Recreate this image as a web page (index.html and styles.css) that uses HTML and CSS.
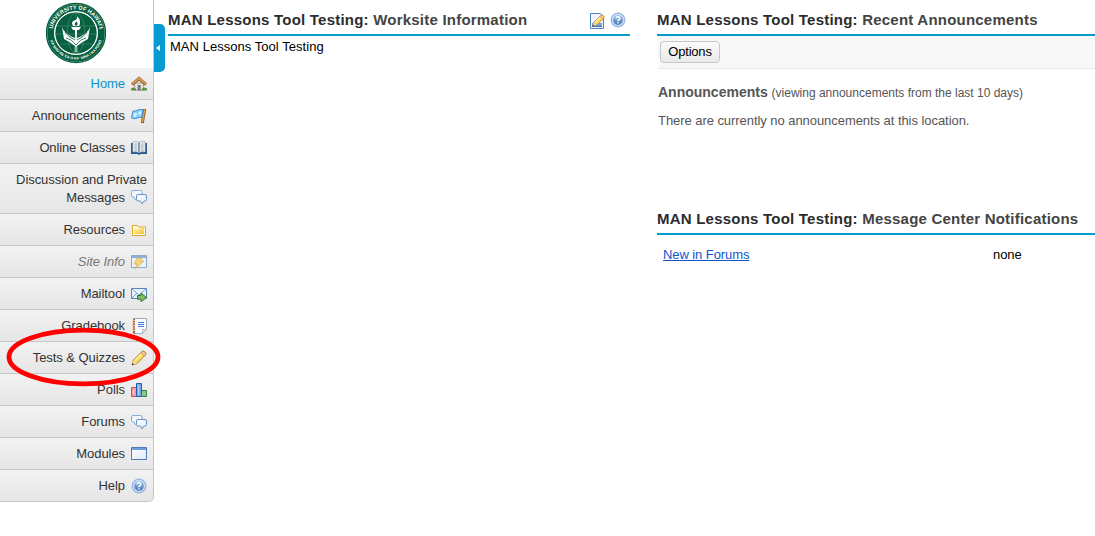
FILE: index.html
```html
<!DOCTYPE html>
<html lang="en">
<head>
<meta charset="utf-8">
<title>MAN Lessons Tool Testing</title>
<link rel="stylesheet" href="styles.css">
</head>
<body>
<svg class="defs" width="0" height="0" aria-hidden="true">
  <defs>
    <linearGradient id="blue" x1="0" y1="0" x2="0" y2="1"><stop offset="0" stop-color="#9cc0ea"/><stop offset="1" stop-color="#4475b5"/></linearGradient>
    <linearGradient id="gold" x1="0" y1="0" x2="1" y2="1"><stop offset="0" stop-color="#fff6b8"/><stop offset="1" stop-color="#efc12c"/></linearGradient>
    <linearGradient id="pane" x1="0" y1="0" x2="1" y2="1"><stop offset="0" stop-color="#fff"/><stop offset="1" stop-color="#dfeafa"/></linearGradient>
    <symbol id="chat" viewBox="0 0 16 16">
      <path d="M2 1.500h7.500q1.500 0 1.500 1.500v3.500q0 1.500-1.500 1.500H6L4.500 11 3 8H2Q.5 8 .5 6.500V3Q.5 1.500 2 1.500z" fill="#f3f8fe" stroke="#86add9"/>
      <path d="M7 5.500h7q1.500 0 1.500 1.500v3.500q0 1.500-1.500 1.500h-1l-2 3-1.500-3H7Q5.500 12 5.500 10.500V7Q5.500 5.500 7 5.500z" fill="url(#pane)" stroke="#6793c8"/>
    </symbol>
    <symbol id="help" viewBox="0 0 16 16">
      <circle cx="8" cy="8" r="7" fill="#b8d0ef" stroke="#7d9fd2" stroke-width=".8"/>
      <circle cx="8" cy="8" r="5.300" fill="url(#blue)" stroke="#eaf2fd" stroke-width=".7"/>
      <path d="M6 6.500Q6.200 4.700 8 4.700t2 1.600Q10 7.300 8 8.200v1M8 10.200v1.400" fill="none" stroke="#fff" stroke-width="1.500"/>
    </symbol>
    <symbol id="pencil" viewBox="0 0 16 16">
      <path d="M1 15l1.500-5L11 1.500q1.500-1 3 .5t.5 3L6 13.500z" fill="#f8d65c" stroke="#b57a20" stroke-width=".9"/>
      <path d="M4 10.500L11.500 3" stroke="#fff3ad" stroke-width="1.500"/>
      <path d="M1.200 14.800l1.300-4.300 3.200 3z" fill="#f7ddb0"/>
      <path d="M.8 15.200l.7-2.200 1.500 1.500z" fill="#3c3020"/>
      <path d="M11 1.800q1.500-1 3 .4t.4 2.800l-1.200 1-3.300-3.200z" fill="#f5c99b" stroke="#bb7c35" stroke-width=".6"/>
    </symbol>
  </defs>
</svg>
<div class="page">
  <aside class="sidebar">
    <div class="logo">
      <svg width="60" height="62" viewBox="-30 -31 60 62" role="img" aria-label="University of Hawaii seal">
        <defs>
          <path id="arc-top" d="M-23.500-3A23.700 23.700 0 0 1 23.500-3"/>
          <path id="arc-bottom" d="M-26.200 5A26.700 26.700 0 0 0 26.200 5"/>
        </defs>
        <circle r="29.500" fill="#fff" stroke="#075f40" stroke-width="1.400"/>
        <circle r="25.300" fill="none" stroke="#075f40" stroke-width="7"/>
        <circle r="20.800" fill="#075f40"/>
        <circle r="21.400" fill="none" stroke="#fff" stroke-width=".8"/>
        <g fill="none" stroke="#5b9b7f" stroke-width=".5"><ellipse rx="9" ry="20"/><path d="M-19-7H19M-20 1H20M-16 11H16M0-20V20"/></g>
        <path d="M-14-6Q-12 1-1 5L0 8 1 5Q12 1 14-6L12 6Q6 9 1 13L0 16-1 13Q-6 9-12 6z" fill="#fff"/>
        <path d="M-11-1Q-8 4-1 7M11-1Q8 4 1 7M-10 5Q-4 6 0 12 4 6 10 5" fill="none" stroke="#075f40" stroke-width=".8"/>
        <path d="M-5-6h10L3-3H1L.7 9H-.7L-1-3h-2zM-3-7Q-6-12 0-13 2-15 1-17 6-12 3-7z" fill="#fff"/>
        <path d="M-1-7.500Q-2-10 1-11.500 2-9 1-7.500z" fill="#075f40"/>
        <path d="M-1.500 14h3v5h-3z" fill="#8dbaa5"/>
        <text class="seal-text"><textPath href="#arc-top" startOffset="50%">UNIVERSITY OF HAWAI‘I</textPath></text>
        <text class="seal-text seal-small"><textPath href="#arc-bottom" startOffset="50%">UA MAU KE EA O KA ‘AINA I KA PONO</textPath></text>
      </svg>
    </div>
    <ul class="tools">
      <li class="tool current"><span>Home</span>
        <svg class="icon" viewBox="0 0 16 16"><path d="M3.500 7h9v7h-9z" fill="#e7e3df" stroke="#8d8178" stroke-width=".7"/><path d="M6.700 9h3v5.500h-3z" fill="#77777d"/><path d="M1 8.500L8 2.500l7 6" fill="none" stroke="#8c5828" stroke-width="3"/><path d="M1.200 8L8 2.200 14.800 8" fill="none" stroke="#d79d5b" stroke-width="1.800"/><path d="M0 12.500l2-1 3 1v2H0zM11 12.500l3-1 2 1v2h-5z" fill="#569542"/><path d="M6 14h4.500v1H6z" fill="#a9a097"/></svg></li>
      <li class="tool"><span>Announcements</span>
        <svg class="icon" viewBox="0 0 16 16"><path d="M11.300 15L13.700 1" stroke="#8d5b22" stroke-width="3"/><path d="M11.500 14L13.500 1.500" stroke="#e3a44c" stroke-width="1.400"/><path d="M2 3q3 .5 5-1t5 0l-1.300 8q-2-1.500-4.700 0t-5.500 0z" fill="#8bd3fa" stroke="#3d8cd0"/><path d="M3 5h3l-1 3.500H2.500zM8 3.500h2.500L10 6.500H7.500z" fill="#d9f4ff"/></svg></li>
      <li class="tool classes"><span>Online Classes</span>
        <svg class="icon" viewBox="0 0 16 16"><path d="M0 3h16v11H9.500L8 15l-1.500-1H0z" fill="#28588f"/><path d="M1.800 1.800q4-1 6.200.8 2.200-1.800 6.200-.8V12q-4-.8-6.200.9Q5.800 11.200 1.800 12z" fill="#f5f7f8" stroke="#7e93a8" stroke-width=".6"/><path d="M8 2.500v10" stroke="#4a6380" stroke-width="1.200"/><path d="M3.300 4h3M3.300 6h3M3.300 8h3M3.300 10h3M9.700 4h3M9.700 6h3M9.700 8h3M9.700 10h3" stroke="#8f999f" stroke-width=".9"/></svg></li>
      <li class="tool two-line"><span>Discussion and Private</span><div class="second"><span>Messages</span><svg class="icon"><use href="#chat"/></svg></div></li>
      <li class="tool"><span>Resources</span>
        <svg class="icon" viewBox="0 0 16 16"><path d="M1.500 13.500v-10h5l1 1.500h7v8.500z" fill="#fffbe4" stroke="#e0a52c"/><path d="M3 12V7h4l1-1h5v6z" fill="url(#gold)"/></svg></li>
      <li class="tool hidden-tool"><span>Site Info</span>
        <svg class="icon" viewBox="0 0 16 16"><path d="M.5 1.500h15v12H.5z" fill="#edf2f9" stroke="#8ea9cd"/><path d="M1 2h14v2H1z" fill="#8eb0df"/><path d="M6 4h5L9.500 7H13L4 15l2-5H3z" fill="#f4d477" stroke="#daae5d" stroke-width=".7"/></svg></li>
      <li class="tool"><span>Mailtool</span>
        <svg class="icon" viewBox="0 0 16 16"><path d="M.5 2.500h15v10H.5z" fill="#eaf4ff" stroke="#5686be"/><path d="M1 3l7 6 7-6M1 12l5-5M15 12l-5-5" fill="none" stroke="#77a2d4"/><path d="M6.500 9.500H10V7l5.500 4.500L10 15.700v-2.500H6.500z" fill="#83bd66" stroke="#33722c"/></svg></li>
      <li class="tool"><span>Gradebook</span>
        <svg class="icon" viewBox="0 0 16 16"><path d="M3.500.5h12v11l-4 4h-8z" fill="#f7faff" stroke="#9cadbf"/><path d="M2 .5h2v15H2z" fill="#aa643e"/><path d="M1 2.500h3M1 5h3M1 7.500h3M1 10h3M1 12.500h3" stroke="#e4c4a5"/><path d="M7 4.500h6M7 6.500h6M7 8.500h6" stroke="#4680cf"/><path d="M11.500 15v-3.500H15" fill="#dfe6ee" stroke="#b4c1cf"/></svg></li>
      <li class="tool"><span>Tests &amp; Quizzes</span><svg class="icon"><use href="#pencil"/></svg></li>
      <li class="tool"><span>Polls</span>
        <svg class="icon" viewBox="0 0 16 16"><path d="M.5 5.500h5v9h-5z" fill="#f59ca0" stroke="#cf4c50"/><path d="M2.500 7.500v5" stroke="#fbd0d0"/><path d="M10.500 8.500h5v6h-5z" fill="#8cc584" stroke="#348448"/><path d="M5.500 1.500h5v13h-5z" fill="#78ace9" stroke="#285da8"/><path d="M7.500 3v10" stroke="#b1d4fb"/></svg></li>
      <li class="tool"><span>Forums</span><svg class="icon"><use href="#chat"/></svg></li>
      <li class="tool"><span>Modules</span>
        <svg class="icon" viewBox="0 0 16 16"><path d="M.5 1.500h15v12H.5z" fill="url(#pane)" stroke="#5078b3"/><path d="M1 2h14v2H1z" fill="#729ddb"/></svg></li>
      <li class="tool"><span>Help</span><svg class="icon"><use href="#help"/></svg></li>
    </ul>
    <svg class="highlight" width="156" height="62" viewBox="0 0 156 62"><ellipse cx="78.500" cy="31" rx="74.500" ry="26.800" fill="none" stroke="#f00" stroke-width="4.800"/></svg>
  </aside>
  <button class="collapse" aria-label="Collapse tool menu"><svg width="4" height="6" viewBox="0 0 4 6"><path d="M4 0v6L0 3z" fill="#fff"/></svg></button>
  <main class="columns">
    <section class="left">
      <header class="bar"><h2><b>MAN Lessons Tool Testing:</b> Worksite Information</h2>
        <div class="actions">
          <svg class="icon" viewBox="0 0 16 16"><path d="M1.500.5h10l3 3v12h-13z" fill="#eff6ff" stroke="#4f83c6"/><path d="M3 10h10v4H3z" fill="#70a6e5"/><path d="M3 13.500h10" stroke="#3b6ead"/><svg x="3" y="1" width="13" height="13"><use href="#pencil"/></svg></svg>
          <svg class="icon help-icon"><use href="#help"/></svg>
        </div></header>
      <p class="site-text">MAN Lessons Tool Testing</p>
    </section>
    <div class="right">
      <section class="announcements">
        <header class="bar"><h2><b>MAN Lessons Tool Testing:</b> Recent Announcements</h2></header>
        <nav class="toolbar"><button class="options">Options</button></nav>
        <h3><b>Announcements</b> <span>(viewing announcements from the last 10 days)</span></h3>
        <p class="empty">There are currently no announcements at this location.</p>
      </section>
      <section>
        <header class="bar"><h2><b>MAN Lessons Tool Testing:</b> Message Center Notifications</h2></header>
        <div class="notice"><a href="#">New in Forums</a><span>none</span></div>
      </section>
    </div>
  </main>
</div>
</body>
</html>
```
FILE: styles.css
```css
* { box-sizing: border-box; }
body { margin: 0; background: #fff; color: #000; font: 13px/18px "Liberation Sans", Arial, sans-serif; overflow: hidden; }
h2, h3, p, ul { margin: 0; padding: 0; }
.defs { position: absolute; }
.page { display: flex; width: 1095px; height: 536px; }
.sidebar { position: relative; width: 154px; height: 502px; flex: none; border-right: 1px solid #c6c6c6; border-radius: 0 0 5px 0; }
.logo { height: 68px; padding: 2px 0 0 46px; }
.logo svg { display: block; }
.seal-text { font: bold 5.6px "Liberation Sans", Arial, sans-serif; fill: #fff; text-anchor: middle; }
.seal-small { font-size: 3.7px; }
.tools { list-style: none; }
.tool { display: flex; justify-content: flex-end; align-items: center; gap: 6px; height: 32px; padding: 1px 6px 0 0; border-bottom: 1px solid #c6c6c6; background: linear-gradient(#f2f2f2, #e6e6e6); color: #333; text-align: right; letter-spacing: -.06px; }
.tool:last-child { border-bottom-right-radius: 5px; }
.icon { display: block; flex: none; width: 16px; height: 16px; }
.current { color: #0a94cf; }
.classes { letter-spacing: -.13px; }
.hidden-tool { color: #777; font-style: italic; }
.two-line { display: block; height: 50px; padding-top: 7px; white-space: nowrap; }
.two-line > span { display: block; }
.second { display: flex; justify-content: flex-end; gap: 6px; }
.highlight { position: absolute; left: 5px; top: 326px; pointer-events: none; }
.collapse { width: 11px; height: 48px; flex: none; margin: 24px 3px 0 0; padding: 0 0 0 2px; border: 0; border-radius: 0 5px 5px 0; background: #079bd1; display: flex; align-items: center; }
.columns { display: grid; grid-template-columns: 462px 438px; gap: 27px; }
.bar { display: flex; justify-content: space-between; height: 36px; padding-top: 10px; border-bottom: 2px solid #079bc9; }
h2 { font-size: 15px; line-height: 20px; color: #444; white-space: nowrap; letter-spacing: .22px; }
h2 b { color: #2c2c2c; }
.actions { display: flex; gap: 5px; padding: 3px 4px 0 0; }
.help-icon { margin-top: -1px; }
.site-text { padding: 2px 0 0 2px; letter-spacing: .04px; }
.announcements { height: 199px; }
.toolbar { height: 33px; margin-left: 1px; padding: 5px 2px 0; border-bottom: 1px solid #e9e9e9; background: #f8f8f8; }
.options { display: block; width: 60px; height: 22px; padding: 0; border: 1px solid #c6c6c6; border-radius: 4px; background: linear-gradient(#fafafa, #eaeaea); color: #000; font: 13px/18px "Liberation Sans", Arial, sans-serif; letter-spacing: -.2px; }
h3 { margin: 14px 0 0 1px; font-size: 14px; line-height: 18px; color: #555; white-space: nowrap; }
h3 span { font-size: 12px; font-weight: 400; }
.empty { margin: 10px 0 0 1px; color: #555; letter-spacing: -.055px; }
.notice { display: grid; grid-template-columns: 330px auto; padding: 11px 0 0 6px; letter-spacing: -.08px; }
.notice a { justify-self: start; color: #1155cc; }
```
